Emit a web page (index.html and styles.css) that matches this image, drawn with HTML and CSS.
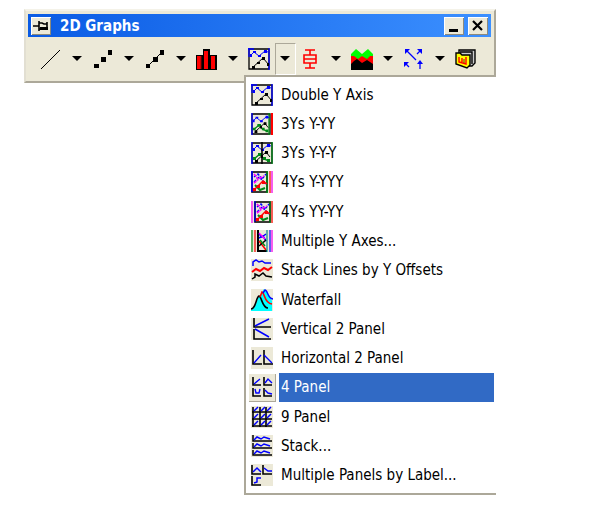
FILE: index.html
```html
<!DOCTYPE html>
<html lang="en">
<head>
  <meta charset="UTF-8" />
  <meta name="viewport" content="width=device-width, initial-scale=1" />
  <title>2D Graphs</title>
  <link rel="stylesheet" href="styles.css">
</head>
<body>
  <!-- shared icon parts -->
  <svg class="defs" aria-hidden="true">
    <symbol id="blue-line" viewBox="0 0 22 22">
      <path d="M2 8L6 4L11 8L17 3L20 4" fill="none" stroke="#00f" />
      <path d="M2 6h2v3H2zM5 3h3v2H5zM10 7h3v2h-3zM16 2h3v3h-3z" fill="#00f" />
    </symbol>
    <symbol id="double-y" viewBox="0 0 22 22">
      <path d="M1 1h20v20H1z" fill="#ece9d8" stroke="#000" stroke-width="1.3" />
      <path d="M1 0v9M0 1h6M21 0v22" stroke="#00f" stroke-width="1.3" />
      <use href="#blue-line" width="22" height="22" />
      <path d="M4 20L15 10L21 17" fill="none" stroke="#000" />
      <path d="M4 18h3v3H4zM9 14h3v2H9zM14 9h3v3h-3zM19 15h2v3h-2z" />
    </symbol>
    <symbol id="green-line" viewBox="0 0 22 22">
      <path d="M3 17L9 12L13 17L18 19" fill="none" stroke="#008a18" stroke-width="1.4" />
      <path d="M2 15h3v3H2zM7 11h4v3H7zM12 15h3v3h-3zM16 17h3v3h-3z" fill="#008a18" />
      <path d="M4 20L15 10L19 15" fill="none" stroke="#000" />
      <path d="M4 18h3v3H4zM10 13h2v3h-2zM14 9h3v3h-3z" />
    </symbol>
    <symbol id="four-lines" viewBox="0 0 22 22">
      <path d="M4 6L8 3L12 8L16 3M4 11L9 6L16 13" fill="none" stroke="#00f" stroke-width="1.4" stroke-dasharray="3 1" />
      <path d="M4 3L8 8L14 5M4 12L8 9" fill="none" stroke="#f0f" stroke-width="1.6" stroke-dasharray="3 1" />
      <path d="M5 14L10 19L15 17" fill="none" stroke="#008a18" stroke-width="2" />
      <path d="M3 20L13 10L17 13" fill="none" stroke="#f00" stroke-width="1.4" />
      <path d="M3 17h3v3H3zM7 14h3v3H7zM12 10h3v3h-3z" fill="#f00" />
    </symbol>
  </svg>

  <main class="window">
    <header class="titlebar">
      <button class="caption-btn pin" aria-label="Pin">
        <svg viewBox="0 0 20 18">
          <path d="M2 9h6M8 4v10M8 6h3l2 1h3V5M8 12h8V5" fill="none" stroke="#000" stroke-width="1.6" />
          <path d="M9 10h8v3H9z" />
        </svg>
      </button>
      <h1>2D Graphs</h1>
      <button class="caption-btn" aria-label="Minimize">
        <svg viewBox="0 0 20 18"><path d="M5 12h9v3H5z" /></svg>
      </button>
      <button class="caption-btn" aria-label="Close">
        <svg viewBox="0 0 20 18"><path d="M5 4L14 13M14 4L5 13" stroke="#000" stroke-width="2.2" /></svg>
      </button>
    </header>

    <div class="toolbar" role="toolbar" aria-label="2D Graphs">
      <div class="split">
        <button class="tool" aria-label="Line">
          <svg viewBox="0 0 22 22"><path d="M1 21L20 2" stroke="#000" /></svg>
        </button>
        <button class="drop" aria-label="Line types"></button>
      </div>
      <div class="split">
        <button class="tool" aria-label="Scatter">
          <svg viewBox="0 0 22 22"><path d="M2 16h5v4H2zM9 9h5v5H9zM16 2h4v5h-4z" /></svg>
        </button>
        <button class="drop" aria-label="Scatter types"></button>
      </div>
      <div class="split">
        <button class="tool" aria-label="Line and symbol">
          <svg viewBox="0 0 22 22">
            <path d="M4 18L18 4" stroke="#000" />
            <path d="M2 16h4v4H2zM9 9h5v5H9zM16 2h4v5h-4z" />
          </svg>
        </button>
        <button class="drop" aria-label="Line and symbol types"></button>
      </div>
      <div class="split">
        <button class="tool" aria-label="Column">
          <svg viewBox="0 0 22 22">
            <path d="M0 7h7V1h7v6h7v15H0z" />
            <path d="M1 8h4v13H1zM8 3h4v18H8zM15 8h4v13h-4z" fill="#f00" />
            <path d="M5 8v13" stroke="#900" />
          </svg>
        </button>
        <button class="drop" aria-label="Column types"></button>
      </div>
      <div class="split">
        <button class="tool" aria-label="Double Y axis">
          <svg viewBox="0 0 22 22"><use href="#double-y" /></svg>
        </button>
        <button class="drop open" aria-label="Multi-panel types" aria-expanded="true"></button>
      </div>
      <div class="split">
        <button class="tool" aria-label="Box chart">
          <svg viewBox="0 0 22 22">
            <path d="M6 2h10M11 2v5M5 7h12v8H5zM5 11h12M11 15v5M6 20h10" fill="none" stroke="#f00" stroke-width="1.6" />
          </svg>
        </button>
        <button class="drop" aria-label="Box chart types"></button>
      </div>
      <div class="split">
        <button class="tool" aria-label="Area">
          <svg viewBox="0 0 22 22">
            <path d="M0 6L5 1L11 6L17 1L22 6V14H0z" fill="#0f0" />
            <path d="M0 8H3L7 11L11 8L16 11L19 8H22V18H0z" fill="#f00" />
            <path d="M0 16L3 13L6 11L11 15L16 12L22 16V22H0z" />
          </svg>
        </button>
        <button class="drop" aria-label="Area types"></button>
      </div>
      <div class="split">
        <button class="tool" aria-label="Vector">
          <svg viewBox="0 0 22 22">
            <path d="M3 2L13 12M14 6L18 2M6 19L3 16M17 21V14" fill="none" stroke="#00f" stroke-width="1.3" />
            <path d="M2 1h5l-5 5zM14 1h5v5zM1 14h5l-5 5zM14 16l3-4l3 4z" fill="#00f" />
          </svg>
        </button>
        <button class="drop" aria-label="Vector types"></button>
      </div>
      <button class="tool" aria-label="Template library">
        <svg viewBox="0 0 22 22">
          <path d="M4 2h16v13l-3 3H8L4 14z" fill="#ccc" stroke="#000" stroke-width="1.4" />
          <path d="M5 4h12v12" fill="none" stroke="#000" stroke-width="1.4" />
          <path d="M1 5h4l2 2h8v10l-3 3L1 16z" fill="#ff0" stroke="#000" stroke-width="1.4" />
          <path d="M4 9v5l7 2V9M7 10v4" fill="none" stroke="#f00" stroke-width="1.4" />
          <path d="M9 11v4" stroke="#630" />
        </svg>
      </button>
    </div>

    <div class="menu" role="menu">
      <button class="item" role="menuitem">
        <span class="icon"><svg viewBox="0 0 22 22"><use href="#double-y" /></svg></span>
        <span class="label">Double Y Axis</span>
      </button>
      <button class="item" role="menuitem">
        <span class="icon"><svg viewBox="0 0 22 22">
          <path d="M0 0h22v22H0z" fill="#ece9d8" />
          <path d="M1 1h18v20H1z" fill="none" stroke="#000" stroke-width="1.3" />
          <path d="M1 0v22" stroke="#00f" stroke-width="1.3" />
          <path d="M18 0v22" stroke="#008a18" stroke-width="1.3" />
          <path d="M21 0v22" stroke="#f00" stroke-width="2" />
          <use href="#blue-line" width="20" height="22" /><use href="#green-line" width="20" height="22" />
        </svg></span>
        <span class="label">3Ys Y-YY</span>
      </button>
      <button class="item" role="menuitem">
        <span class="icon"><svg viewBox="0 0 22 22">
          <path d="M1 1h20v20H1z" fill="#ece9d8" stroke="#000" stroke-width="1.3" />
          <path d="M1 0v22" stroke="#00f" stroke-width="1.3" />
          <path d="M21 0v22" stroke="#008a18" stroke-width="1.3" />
          <use href="#blue-line" /><use href="#green-line" />
          <path d="M11 0v22" stroke="#000" stroke-width="1.6" />
        </svg></span>
        <span class="label">3Ys Y-Y-Y</span>
      </button>
      <button class="item" role="menuitem">
        <span class="icon"><svg viewBox="0 0 22 22">
          <path d="M0 0h22v22H0z" fill="#ece9d8" />
          <path d="M1 1h15v20H1z" fill="none" stroke="#000" stroke-width="1.6" />
          <path d="M1 0v21" stroke="#00f" stroke-width="1.6" />
          <path d="M16 0v22" stroke="#008a18" stroke-width="1.6" />
          <path d="M19 0v22" stroke="#f00" stroke-width="1.2" />
          <path d="M21 0v22" stroke="#f0f" stroke-width="1.2" />
          <use href="#four-lines" x="-1" width="22" height="22" />
        </svg></span>
        <span class="label">4Ys Y-YYY</span>
      </button>
      <button class="item" role="menuitem">
        <span class="icon"><svg viewBox="0 0 22 22">
          <path d="M0 0h22v22H0z" fill="#ece9d8" />
          <path d="M4 1h15v20H4z" fill="none" stroke="#000" stroke-width="1.6" />
          <path d="M1 0v22" stroke="#f0f" stroke-width="1.2" />
          <path d="M4 0v21" stroke="#00f" stroke-width="1.2" />
          <path d="M19 0v22" stroke="#008a18" stroke-width="1.2" />
          <path d="M21 0v22" stroke="#f00" stroke-width="1.2" />
          <use href="#four-lines" x="2" width="22" height="22" />
        </svg></span>
        <span class="label">4Ys YY-YY</span>
      </button>
      <button class="item" role="menuitem">
        <span class="icon"><svg viewBox="0 0 22 22">
          <path d="M0 0h22v22H0z" fill="#ece9d8" />
          <path d="M1 0v22" stroke="#008a18" stroke-width="1.2" />
          <path d="M4 0v22" stroke="#f00" stroke-width="1.2" />
          <path d="M7 0v22M7 21h9" stroke="#000" stroke-width="2" />
          <path d="M8 4l3 3l4-3M8 8l4-2l3 5" fill="none" stroke="#00f" stroke-width="1.5" />
          <path d="M8 3l6 6" stroke="#f0f" stroke-width="1.5" />
          <path d="M8 11l7 9" stroke="#f00" stroke-width="1.5" />
          <path d="M8 16l7-6" stroke="#000" stroke-width="1.5" />
          <path d="M9 10l5 6" stroke="#008a18" stroke-width="1.5" />
          <path d="M16 0v22" stroke="#088" stroke-width="1.2" />
          <path d="M19 0v22" stroke="#00f" stroke-width="1.2" />
          <path d="M21 0v22" stroke="#f0f" stroke-width="1.2" />
        </svg></span>
        <span class="label">Multiple Y Axes...</span>
      </button>
      <button class="item" role="menuitem">
        <span class="icon"><svg viewBox="0 0 22 22">
          <path d="M0 0h22v22H0z" fill="#ece9d8" />
          <path d="M2 7V3L5 1L8 3L11 2L14 4H20" fill="none" stroke="#00f" stroke-width="1.5" />
          <path d="M1 13L5 10L9 12L13 9L17 11L21 8" fill="none" stroke="#f00" stroke-width="2" />
          <path d="M1 20L4 18V15L8 17L12 14L15 17L21 18" fill="none" stroke="#000" stroke-width="1.5" />
        </svg></span>
        <span class="label">Stack Lines by Y Offsets</span>
      </button>
      <button class="item" role="menuitem">
        <span class="icon"><svg viewBox="0 0 22 22">
          <path d="M0 0h22v22H0z" fill="#ece9d8" />
          <path d="M0 21C5 20 6 9 8 8C9 8 10 7 11 3L13 0L17 4L21 12V22H0z" fill="#0ff" />
          <path d="M0 20C5 20 5 8 8 7C11 8 11 19 17 19" fill="none" stroke="#000" stroke-width="1.6" />
          <path d="M9 8L11 3C14 4 13 14 21 15" fill="none" stroke="#f00" stroke-width="1.6" />
          <path d="M12 4L14 1C17 1 16 9 22 10" fill="none" stroke="#00f" stroke-width="1.4" />
        </svg></span>
        <span class="label">Waterfall</span>
      </button>
      <button class="item" role="menuitem">
        <span class="icon"><svg viewBox="0 0 22 22">
          <path d="M0 0h22v22H0z" fill="#ece9d8" />
          <path d="M3 0v9h17M3 11v10h17" fill="none" stroke="#000" stroke-width="1.6" />
          <path d="M4 8L18 1M4 11L18 19" stroke="#00f" stroke-width="1.5" />
        </svg></span>
        <span class="label">Vertical 2 Panel</span>
      </button>
      <button class="item" role="menuitem">
        <span class="icon"><svg viewBox="0 0 22 22">
          <path d="M0 0h22v22H0z" fill="#ece9d8" />
          <path d="M2 3v14h9M13 3v14h9" fill="none" stroke="#000" stroke-width="1.6" />
          <path d="M3 16L10 8M13 8L21 16" stroke="#00f" stroke-width="1.4" />
        </svg></span>
        <span class="label">Horizontal 2 Panel</span>
      </button>
      <button class="item selected" role="menuitem">
        <span class="icon"><svg viewBox="0 0 22 22">
          <path d="M2 1v8h8M13 1v8h8M2 12v8h8M13 12v8h8" fill="none" stroke="#000" stroke-width="1.6" />
          <path d="M3 8L9 3M14 7L17 3L21 7M4 13L5 17H8L9 13M14 14L17 17L21 18" fill="none" stroke="#00f" stroke-width="1.4" />
        </svg></span>
        <span class="label">4 Panel</span>
      </button>
      <button class="item" role="menuitem">
        <span class="icon"><svg viewBox="0 0 22 22">
          <path d="M0 0h22v22H0z" fill="#ece9d8" />
          <path d="M2 1v20M9 1v20M15 1v20M1 6h20M1 13h20M1 20h20" stroke="#000" stroke-width="1.6" />
          <path d="M3 5l4-4M10 5l4-4M16 5l4-4M3 12l4-4M10 12l4-4M16 12l4-4M3 19l4-4M10 19l4-4M16 19l4-4" stroke="#00f" stroke-width="1.5" />
        </svg></span>
        <span class="label">9 Panel</span>
      </button>
      <button class="item" role="menuitem">
        <span class="icon"><svg viewBox="0 0 22 22">
          <path d="M0 0h22v22H0z" fill="#ece9d8" />
          <path d="M2 0v6h19M2 8v5h19M2 15v5h19" fill="none" stroke="#000" stroke-width="1.5" />
          <path d="M3 5L6 2L10 4L13 2L19 4M3 12L6 9L10 11L13 9L19 11M3 19L6 16L10 18L13 16L19 18" fill="none" stroke="#00f" stroke-width="1.5" />
        </svg></span>
        <span class="label">Stack...</span>
      </button>
      <button class="item" role="menuitem">
        <span class="icon"><svg viewBox="0 0 22 22">
          <path d="M0 0h22v22H0z" fill="#ece9d8" />
          <path d="M1 1v9h9M12 1v9h9M1 12v9h9" fill="none" stroke="#000" stroke-width="1.6" />
          <path d="M2 8L6 4L10 8M13 4L17 7H21M3 19L6 18V14H10" fill="none" stroke="#00f" stroke-width="1.5" />
        </svg></span>
        <span class="label">Multiple Panels by Label...</span>
      </button>
    </div>
  </main>
</body>
</html>
```

FILE: styles.css
```css
* {
  box-sizing: border-box;
}

body {
  margin: 0;
  padding: 9px 24px;
  min-height: 100vh;
  background: #fff;
  color: #000;
  font-family: "DejaVu Sans Condensed", "DejaVu Sans", Tahoma, sans-serif;
  font-size: 15px;
}

button {
  margin: 0;
  padding: 0;
  border: none;
  background: none;
  color: inherit;
  font: inherit;
}

svg {
  display: block;
  width: 22px;
  height: 22px;
}

.defs {
  position: absolute;
  width: 0;
  height: 0;
}

.window {
  position: relative;
  max-width: 472px;
  padding: 3px 3px 1px 2px;
  background: #ece9d8;
  border-top: 2px solid #f4f2e8;
  border-left: 2px solid #e2dfd2;
  border-right: 2px solid #aca899;
  border-bottom: 2px solid #aca899;
}

.titlebar {
  display: flex;
  align-items: center;
  gap: 4px;
  height: 23px;
  padding: 0 3px;
  background: linear-gradient(to right, #0a5be4, #3c90ff);
}

.titlebar h1 {
  flex: 1;
  margin: 0 5px;
  color: #fff;
  font-size: 15px;
  font-weight: bold;
}

.caption-btn {
  width: 20px;
  height: 18px;
  background: #ece9d8;
  box-shadow: inset 1px 1px #fff, inset -1px -1px #8d8a7c;
}

.caption-btn svg {
  width: 20px;
  height: 18px;
}

.toolbar {
  display: grid;
  grid-template-columns: repeat(8, 1fr) 28px;
  align-items: center;
  height: 43px;
  padding: 0 11px 0 9px;
}

.split {
  display: flex;
  align-items: center;
}

.tool {
  display: flex;
  align-items: center;
  justify-content: center;
  width: 28px;
  height: 32px;
}

.drop {
  display: flex;
  flex: 1;
  align-items: center;
  justify-content: center;
  height: 32px;
}

.drop::before {
  content: "";
  border: 5px solid transparent;
  border-top-color: #000;
  border-bottom: none;
}

.open {
  border: 1px solid #fff;
  border-top-color: #aca899;
  border-left-color: #aca899;
  margin-left: 2px;
}

.menu {
  position: absolute;
  z-index: 1;
  top: 64px;
  right: -2px;
  display: grid;
  grid-auto-rows: 1fr;
  width: 252px;
  min-height: 420px;
  padding: 3px 2px;
  background: #fff;
  border: 2px solid #aca899;
  border-right: none;
}

.item {
  display: flex;
  align-items: stretch;
  gap: 3px;
  text-align: left;
}

.icon {
  display: flex;
  align-items: center;
  justify-content: center;
  width: 28px;
}

.label {
  display: flex;
  flex: 1;
  align-items: center;
  padding-left: 2px;
}

.selected .icon {
  background: #ece9d8;
  box-shadow: inset 1px 1px #fff, inset -1px -1px #aca899;
}

.selected .label {
  background: #316ac5;
  color: #fff;
}
```
